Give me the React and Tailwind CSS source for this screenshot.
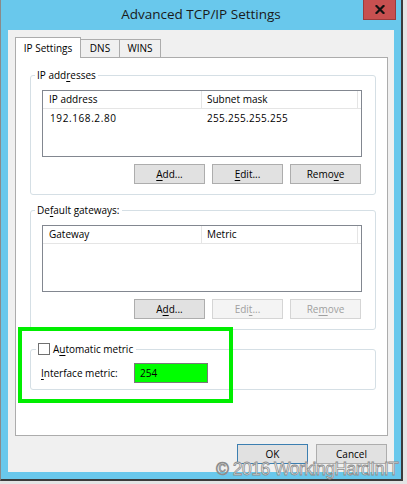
import React from "react";

const Btn = ({ children, disabled, primary }) => (
  <button
    className={
      disabled
        ? "w-[71px] h-[20px] border border-[#d5d5d5] bg-[#f4f4f4] text-[#a0a0a0] text-[10px] leading-none"
        : primary
        ? "w-[71px] h-[20px] border border-[#3c7fb1] bg-[#e1e1e1] text-black text-[10px] leading-none"
        : "w-[71px] h-[20px] border border-[#adadad] bg-[#e1e1e1] text-black text-[10px] leading-none"
    }
  >
    {children}
  </button>
);

const U = ({ children }) => (
  <span className="underline decoration-1 underline-offset-[2px]">{children}</span>
);

const ListView = ({ cols, rows }) => (
  <div className="ml-[11px] mr-[13px] h-[67px] border border-[#828790] bg-white">
    <div className="flex h-[18px] border-b border-[#e5e5e5]">
      <div className="w-[159px] border-r border-[#e5e5e5] pl-[6px] flex items-center">{cols[0]}</div>
      <div className="w-[156px] border-r border-[#e5e5e5] pl-[5px] flex items-center">{cols[1]}</div>
    </div>
    {rows.map((r) => (
      <div key={r[0]} className="flex h-[18px] items-center">
        <div className="w-[159px] pl-[7px] tracking-[0.6px]">{r[0]}</div>
        <div className="w-[156px] pl-[5px] tracking-[0.3px]">{r[1]}</div>
      </div>
    ))}
  </div>
);

export default function App() {
  return (
    <div className="relative w-[407px] h-[484px] bg-[#e4e4e4] overflow-hidden font-['Open_Sans',sans-serif] text-[10px] text-black">
      <div className="w-[403px] h-[481px] bg-[#69c8ec] border-l border-r-2 border-b-2 border-l-[#8a8a8a] border-r-[#3b3b3b] border-b-[#3b3b3b] flex flex-col">
        {/* title bar */}
        <div className="relative h-[30px] flex items-center justify-center">
          <span className="text-[13.5px] text-[#1a1a1a] leading-none">Advanced TCP/IP Settings</span>
          <div className="absolute right-[5px] top-0 w-[33px] h-[20px] bg-[#c75050] border border-t-0 border-[#9b3b3b] flex items-center justify-center">
            <svg width="10" height="9" viewBox="0 0 10 9">
              <path d="M1.5 1 L8.5 8 M8.5 1 L1.5 8" stroke="#111" strokeWidth="2.2" strokeLinecap="square" />
            </svg>
          </div>
        </div>

        {/* client area */}
        <div className="mx-[7px] mb-[7px] flex-1 bg-[#f0f0f0] pl-[7px] pr-[6px] pt-[7px] flex flex-col">
          <div className="flex items-end h-[20px]">
            <div className="relative z-10 -mb-px w-[66px] h-[21px] bg-white border border-b-0 border-[#acacac] flex items-center justify-center">
              IP Settings
            </div>
            <div className="-ml-px w-[40px] h-[18px] bg-[#f0f0f0] border border-b-0 border-[#acacac] flex items-center justify-center">
              DNS
            </div>
            <div className="-ml-px w-[42px] h-[18px] bg-[#f0f0f0] border border-b-0 border-[#acacac] flex items-center justify-center">
              WINS
            </div>
          </div>

          <div className="h-[379px] border border-[#acacac] bg-white flex flex-col">
            <fieldset className="mt-[10px] ml-[14px] mr-[11px] border border-[#d5dfe5] rounded-[3px] pb-[10px]">
              <legend className="ml-[4px] px-[2px] leading-[14px]">
                IP add<U>r</U>esses
              </legend>
              <div className="mt-[8px]">
                <ListView cols={["IP address", "Subnet mask"]} rows={[["192.168.2.80", "255.255.255.255"]]} />
              </div>
              <div className="mt-[7px] mr-[14px] flex justify-end gap-[7px]">
                <Btn><U>A</U>dd...</Btn>
                <Btn><U>E</U>dit...</Btn>
                <Btn>Remo<U>v</U>e</Btn>
              </div>
            </fieldset>

            <fieldset className="mt-[8px] ml-[14px] mr-[11px] border border-[#d5dfe5] rounded-[3px] pb-[10px]">
              <legend className="ml-[4px] px-[2px] leading-[14px]">
                De<U>f</U>ault gateways:
              </legend>
              <div className="mt-[8px]">
                <ListView cols={["Gateway", "Metric"]} rows={[]} />
              </div>
              <div className="mt-[7px] mr-[14px] flex justify-end gap-[7px]">
                <Btn>A<U>d</U>d...</Btn>
                <Btn disabled>Edi<U>t</U>...</Btn>
                <Btn disabled>Re<U>m</U>ove</Btn>
              </div>
            </fieldset>

            <fieldset className="mt-[12px] ml-[14px] mr-[11px] border border-[#d5dfe5] rounded-[3px] pb-[6px]">
              <legend className="ml-[5px] pl-[2px] pr-[3px] leading-[14px] flex items-center gap-[3px]">
                <span className="w-[12px] h-[12px] border border-[#707070] bg-white inline-block" />
                <span>A<U>u</U>tomatic metric</span>
              </legend>
              <div className="mt-[7px] pl-[10px] flex items-center">
                <span className="w-[93px]"><U>I</U>nterface metric:</span>
                <div className="w-[74px] h-[20px] border border-[#7a7a7a] bg-[#00ff00] pl-[5px] flex items-center">254</div>
              </div>
            </fieldset>
          </div>

          <div className="mt-[8px] mr-[1px] flex justify-end gap-[8px]">
            <Btn primary>OK</Btn>
            <Btn>Cancel</Btn>
          </div>
        </div>
      </div>

      {/* annotation */}
      <div className="absolute left-[18px] top-[327px] w-[215px] h-[76px] border-4 border-[#00ee00]" />

      {/* watermark */}
      <div className="absolute left-[216px] top-[461px] font-['Liberation_Sans',sans-serif] text-[17.5px] tracking-[-0.5px] leading-none text-white/85 [-webkit-text-stroke:0.8px_#8c8c8c]">
        © 2016 WorkingHardInIT
      </div>
    </div>
  );
}
